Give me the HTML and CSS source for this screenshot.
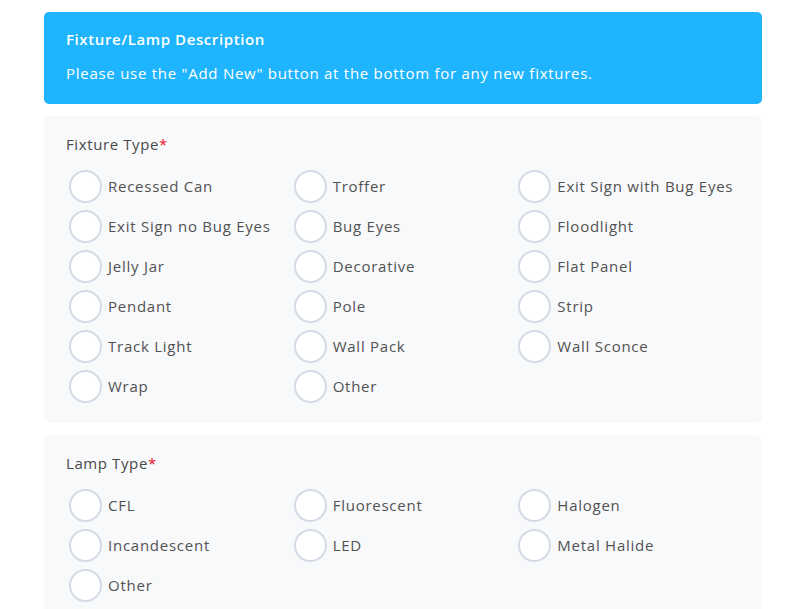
FILE: index.html
```html
<!DOCTYPE html>
<html>
<head>
<meta charset="utf-8">
<link rel="stylesheet" href="styles.css">
</head>
<body>
<div class="page">
  <div class="banner">
    <div class="banner-title">Fixture/Lamp Description</div>
    <div class="banner-text">Please use the "Add New" button at the bottom for any new fixtures.</div>
  </div>
  <div class="card">
    <div class="field-label">Fixture Type<span class="req">*</span></div>
    <div class="options">
      <label class="opt"><span class="radio"></span>Recessed Can</label>
      <label class="opt"><span class="radio"></span>Troffer</label>
      <label class="opt"><span class="radio"></span>Exit Sign with Bug Eyes</label>
      <label class="opt"><span class="radio"></span>Exit Sign no Bug Eyes</label>
      <label class="opt"><span class="radio"></span>Bug Eyes</label>
      <label class="opt"><span class="radio"></span>Floodlight</label>
      <label class="opt"><span class="radio"></span>Jelly Jar</label>
      <label class="opt"><span class="radio"></span>Decorative</label>
      <label class="opt"><span class="radio"></span>Flat Panel</label>
      <label class="opt"><span class="radio"></span>Pendant</label>
      <label class="opt"><span class="radio"></span>Pole</label>
      <label class="opt"><span class="radio"></span>Strip</label>
      <label class="opt"><span class="radio"></span>Track Light</label>
      <label class="opt"><span class="radio"></span>Wall Pack</label>
      <label class="opt"><span class="radio"></span>Wall Sconce</label>
      <label class="opt"><span class="radio"></span>Wrap</label>
      <label class="opt"><span class="radio"></span>Other</label>
    </div>
  </div>
  <div class="card">
    <div class="field-label">Lamp Type<span class="req">*</span></div>
    <div class="options">
      <label class="opt"><span class="radio"></span>CFL</label>
      <label class="opt"><span class="radio"></span>Fluorescent</label>
      <label class="opt"><span class="radio"></span>Halogen</label>
      <label class="opt"><span class="radio"></span>Incandescent</label>
      <label class="opt"><span class="radio"></span>LED</label>
      <label class="opt"><span class="radio"></span>Metal Halide</label>
      <label class="opt"><span class="radio"></span>Other</label>
    </div>
  </div>
</div>
</body>
</html>
```

FILE: styles.css
```css
html, body {
  margin: 0;
  padding: 0;
  background: #ffffff;
}
body {
  font-family: "Open Sans", "Noto Sans", sans-serif;
  font-size: 15px;
}
.page {
  width: 718px;
  margin-left: 44px;
  padding-top: 12px;
  display: flex;
  flex-direction: column;
  gap: 12px;
}
.banner {
  background: #1fb4fe;
  border-radius: 5px;
  padding: 16px 22px 20px;
  color: #ffffff;
  display: flex;
  flex-direction: column;
  gap: 12px;
}
.banner-title {
  font-weight: 600;
  line-height: 22px;
  letter-spacing: 0.6px;
}
.banner-text {
  line-height: 22px;
  letter-spacing: 0.73px;
}
.card {
  background: #f8f9fb;
  border-radius: 6px;
  padding: 17px 22px 17px;
}
.field-label {
  color: #4a4a4a;
  font-weight: 500;
  line-height: 22px;
  margin-bottom: 11px;
  letter-spacing: 0.6px;
}
.req {
  color: #e8102a;
}
.options {
  display: grid;
  grid-template-columns: repeat(3, 1fr);
}
.opt {
  display: flex;
  align-items: center;
  height: 40px;
  color: #525252;
  letter-spacing: 0.75px;
}
.radio {
  box-sizing: border-box;
  width: 33px;
  height: 33px;
  border: 2px solid #d4dbe6;
  border-radius: 50%;
  background: #ffffff;
  margin-left: 3px;
  margin-right: 6px;
  flex: none;
}
```
